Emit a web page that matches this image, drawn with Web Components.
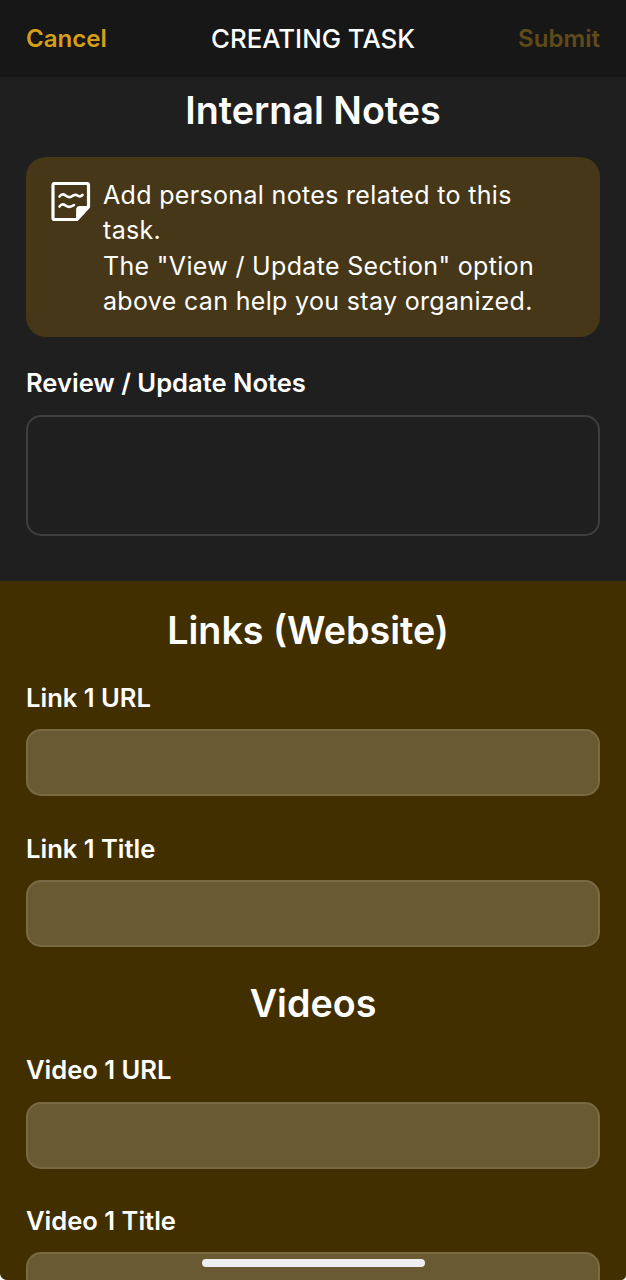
<!DOCTYPE html>
<html><head><meta charset="utf-8">
<style>
html,body{margin:0;padding:0;height:1280px;overflow:hidden;background:#1f1f1f;font-family:Inter,"Liberation Sans",sans-serif;-webkit-font-smoothing:antialiased}
</style></head><body>
<task-page>
<top-bar></top-bar>
<form-section tone="dark" style="height:504px">
  <section-title style="--mt:10px">Internal Notes</section-title>
  <info-box>Add personal notes related to this task.<br>The "View / Update Section" option above can help you stay organized.</info-box>
  <field-label style="--mt:31px">Review / Update Notes</field-label>
  <text-box tall style="--gap:17px"></text-box>
</form-section>
<form-section tone="gold">
  <section-title style="--mt:26px;--shift:-5px">Links (Website)</section-title>
  <field-label style="--mt:30px">Link 1 URL</field-label>
  <text-box></text-box>
  <field-label style="--mt:38px">Link 1 Title</field-label>
  <text-box></text-box>
  <section-title style="--mt:33px">Videos</section-title>
  <field-label style="--mt:29px">Video 1 URL</field-label>
  <text-box style="--gap:17px"></text-box>
  <field-label style="--mt:37px">Video 1 Title</field-label>
  <text-box></text-box>
</form-section>
<home-bar></home-bar>
<screen-corner side="left"></screen-corner>
<screen-corner side="right"></screen-corner>
</task-page>
<script>
function def(name,html){customElements.define(name,class extends HTMLElement{constructor(){super();this.attachShadow({mode:'open'}).innerHTML=html}})}
def('task-page',`<style>:host{display:block;position:relative;width:626px;height:1280px;overflow:hidden}</style><slot></slot>`);
def('top-bar',`<style>:host{display:flex;align-items:center;justify-content:space-between;box-sizing:border-box;height:77px;padding:0 26px;background:#171717;font-weight:600;font-size:24.100px;position:relative}
.c{color:#d69f18}.t{position:absolute;left:0;right:0;text-align:center;color:#fff;font-size:25.800px;font-weight:500}.s{color:#5f4a1a}</style>
<span class="c">Cancel</span><span class="t">CREATING TASK</span><span class="s">Submit</span>`);
def('form-section',`<style>:host{display:block;box-sizing:border-box;padding:0 26px;overflow:hidden}
:host([tone=dark]){background:#1f1f1f;--fill:#1f1f1f;--line:#3f3f41}
:host([tone=gold]){background:#422f00;height:699px;--fill:#6a5a34;--line:#7a6a44}</style><slot></slot>`);
def('section-title',`<style>:host{display:block;margin-top:var(--mt,0);text-align:center;color:#fff;font-size:37.700px;font-weight:600;line-height:46px;transform:translateX(var(--shift,0))}</style><slot></slot>`);
def('field-label',`<style>:host{display:block;margin-top:var(--mt,0);color:#fff;font-size:25.550px;font-weight:600;line-height:30px}</style><slot></slot>`);
def('text-box',`<style>:host{display:block;box-sizing:border-box;margin-top:var(--gap,16px);height:67px;border-radius:15px;background:var(--fill);border:2px solid var(--line)}
:host([tall]){height:121px}</style>`);
def('info-box',`<style>:host{display:flex;gap:12px;box-sizing:border-box;margin-top:24px;height:180px;padding:21px 24px 0 25px;border-radius:20px;background:#463718;color:#fff;font-size:25px;line-height:35.300px;letter-spacing:.33px}
svg{flex:none;width:40px;height:40px;margin-top:4px}</style>
<svg viewBox="0 0 40 40" fill="none" stroke="#fff" stroke-linecap="round" stroke-linejoin="round">
<path d="M3.500 1.500H36a1.500 1.500 0 0 1 1.500 1.500V25L26 37.500H3.500a1.500 1.500 0 0 1-1.500-1.500V3a1.500 1.500 0 0 1 1.500-1.500Z" stroke-width="3.200"/>
<path d="M37.500 25H29a3 3 0 0 0-3 3v9.500Z" fill="#fff" stroke-width="1.800"/>
<path d="M8.500 14.500c2-2.500 4-2.500 6-1s4 2.500 6 1 4-2.500 6-1 3 1.500 5-.5" stroke-width="2.600"/>
<path d="M8.500 24.500c2-2.500 4-2.500 6-1s5 2 8.500-.5" stroke-width="2.600"/>
</svg><div><slot></slot></div>`);
def('home-bar',`<style>:host{display:block;position:absolute;left:202px;top:1259px;width:223px;height:8px;border-radius:4px;background:#eeeef0}</style>`);
def('screen-corner',`<style>:host{display:block;position:absolute;bottom:0;width:7px;height:7px}
:host([side=left]){left:0;background:radial-gradient(circle at 100% 0,transparent 6.500px,#fff 7.500px)}
:host([side=right]){right:0;width:5px;height:5px;background:radial-gradient(circle at 0 0,transparent 4.500px,#fff 5.500px)}</style>`);
</script>
</body></html>
